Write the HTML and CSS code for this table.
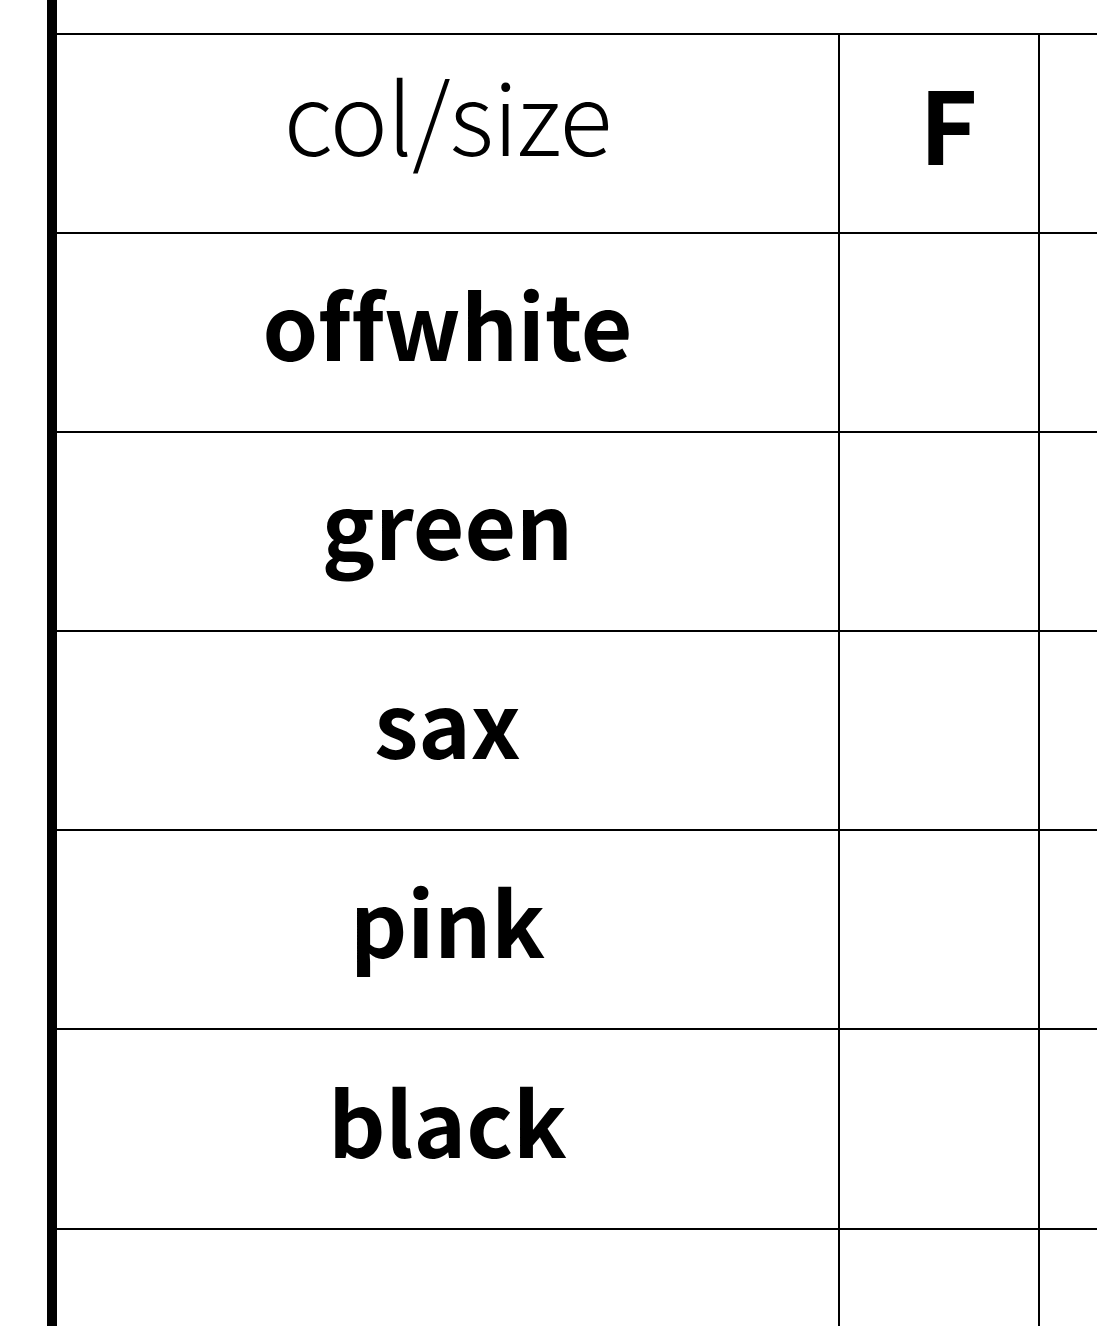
FILE: index.html
```html
<!DOCTYPE html>
<html lang="ja">
<head>
<meta charset="utf-8">
<title>col/size</title>
<link rel="stylesheet" href="styles.css">
</head>
<body>
<div class="page">
  <div class="sheet">
    <div class="grid">
      <div class="cell head-label first-row">col/size</div>
      <div class="cell head-size first-row">F</div>
      <div class="cell first-row last-col"></div>

      <div class="cell color">offwhite</div>
      <div class="cell"></div>
      <div class="cell last-col"></div>

      <div class="cell color">green</div>
      <div class="cell"></div>
      <div class="cell last-col"></div>

      <div class="cell color">sax</div>
      <div class="cell"></div>
      <div class="cell last-col"></div>

      <div class="cell color">pink</div>
      <div class="cell"></div>
      <div class="cell last-col"></div>

      <div class="cell color">black</div>
      <div class="cell"></div>
      <div class="cell last-col"></div>

      <div class="cell color"></div>
      <div class="cell"></div>
      <div class="cell last-col"></div>
    </div>
  </div>
</div>
</body>
</html>
```

FILE: styles.css
```css
html, body {
  margin: 0;
  padding: 0;
  background: #fff;
  overflow: hidden;
}

.page {
  width: 1097px;
  height: 1326px;
  overflow: hidden;
  padding-left: 47px;
  box-sizing: border-box;
}

.sheet {
  border-left: 10px solid #000;
  height: 100%;
  padding-top: 33px;
  box-sizing: border-box;
}

.grid {
  display: grid;
  grid-template-columns: 783px 200px 200px;
  grid-template-rows: 201px 199px 199px 199px 199px 200px 199px;
  font-family: "Noto Sans CJK JP", "Noto Sans", sans-serif;
  font-variant-ligatures: none;
  color: #000;
}

.cell {
  border-right: 2px solid #000;
  border-bottom: 2px solid #000;
  display: flex;
  align-items: center;
  justify-content: center;
  line-height: 1;
}

.first-row {
  border-top: 2px solid #000;
}

.head-label {
  font-size: 98px;
  font-weight: 300;
  letter-spacing: -1px;
  padding-bottom: 42px;
}

.head-size {
  font-size: 100px;
  font-weight: 700;
  padding-left: 19px;
  padding-bottom: 24px;
}

.color {
  font-size: 89px;
  font-weight: 700;
  padding-bottom: 20px;
}
```
